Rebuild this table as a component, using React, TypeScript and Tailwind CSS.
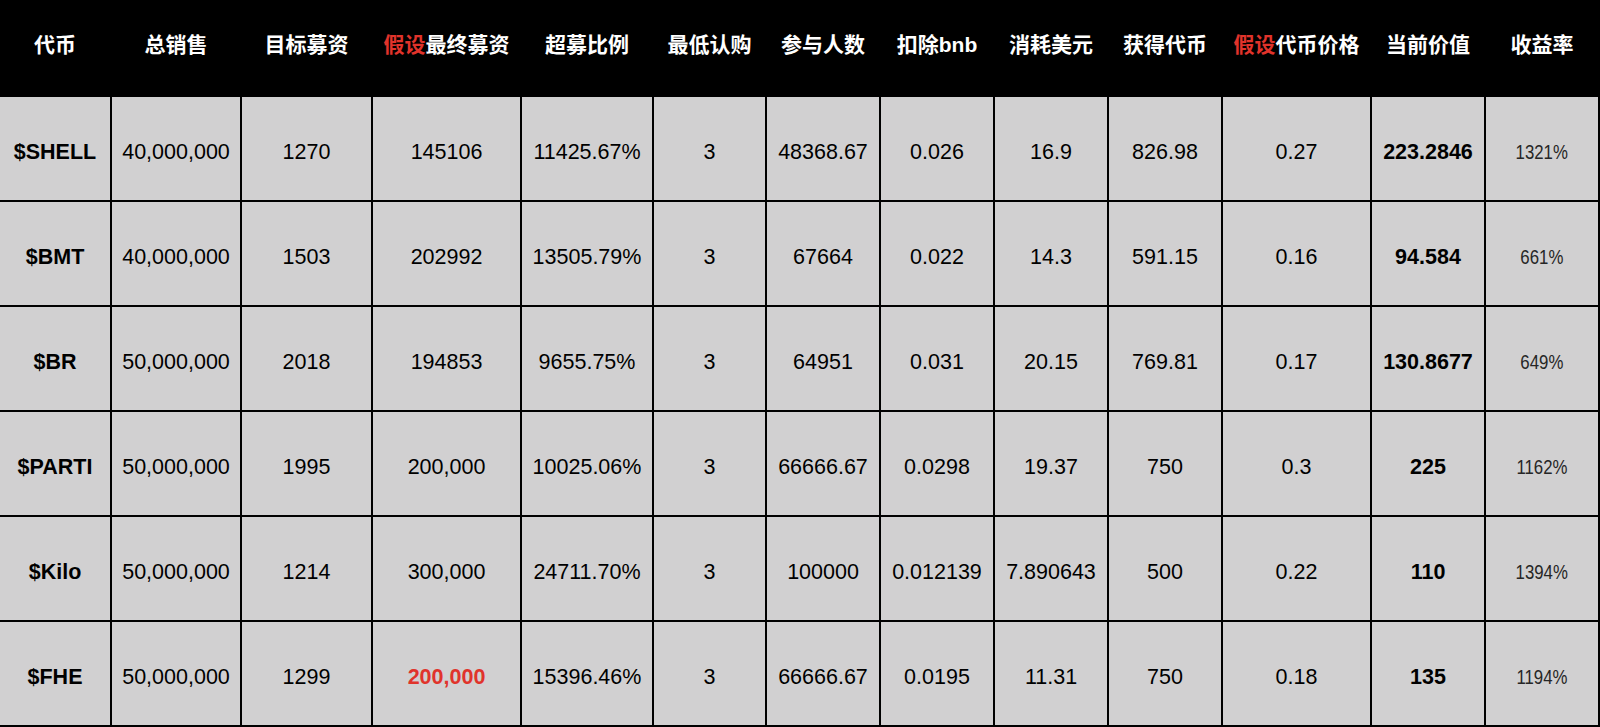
import React from "react";

const cols =
  "grid grid-cols-[110px_128px_129px_147px_130px_111px_112px_112px_112px_112px_147px_112px_112px] gap-x-[2px]";

type Row = {
  coin: string;
  total: string;
  target: string;
  final: string;
  finalRed?: boolean;
  ratio: string;
  min: string;
  people: string;
  bnb: string;
  usd: string;
  tokens: string;
  price: string;
  value: string;
  yieldRate: string;
};

const rows: Row[] = [
  { coin: "$SHELL", total: "40,000,000", target: "1270", final: "145106", ratio: "11425.67%", min: "3", people: "48368.67", bnb: "0.026", usd: "16.9", tokens: "826.98", price: "0.27", value: "223.2846", yieldRate: "1321%" },
  { coin: "$BMT", total: "40,000,000", target: "1503", final: "202992", ratio: "13505.79%", min: "3", people: "67664", bnb: "0.022", usd: "14.3", tokens: "591.15", price: "0.16", value: "94.584", yieldRate: "661%" },
  { coin: "$BR", total: "50,000,000", target: "2018", final: "194853", ratio: "9655.75%", min: "3", people: "64951", bnb: "0.031", usd: "20.15", tokens: "769.81", price: "0.17", value: "130.8677", yieldRate: "649%" },
  { coin: "$PARTI", total: "50,000,000", target: "1995", final: "200,000", ratio: "10025.06%", min: "3", people: "66666.67", bnb: "0.0298", usd: "19.37", tokens: "750", price: "0.3", value: "225", yieldRate: "1162%" },
  { coin: "$Kilo", total: "50,000,000", target: "1214", final: "300,000", ratio: "24711.70%", min: "3", people: "100000", bnb: "0.012139", usd: "7.890643", tokens: "500", price: "0.22", value: "110", yieldRate: "1394%" },
  { coin: "$FHE", total: "50,000,000", target: "1299", final: "200,000", finalRed: true, ratio: "15396.46%", min: "3", people: "66666.67", bnb: "0.0195", usd: "11.31", tokens: "750", price: "0.18", value: "135", yieldRate: "1194%" },
];

function Cell({ children, className = "" }: { children: React.ReactNode; className?: string }) {
  return (
    <div
      className={
        "bg-[#d1d0d1] h-[103px] flex items-center justify-center pt-[7px] text-[21.5px] whitespace-nowrap " +
        className
      }
    >
      {children}
    </div>
  );
}

export default function App() {
  const font = { fontFamily: '"Liberation Sans", Arial, "Noto Sans CJK SC", sans-serif' };
  return (
    <div className="w-[1600px] h-[727px] bg-white overflow-hidden text-black" style={font}>
      <div className={cols + " bg-black h-[97px] pr-[2px] pb-[8px] items-center text-white font-bold text-[21px]"}>
        <div className="text-center">代币</div>
        <div className="text-center">总销售</div>
        <div className="text-center">目标募资</div>
        <div className="text-center">
          <span className="text-[#e0332b]">假设</span>最终募资
        </div>
        <div className="text-center">超募比例</div>
        <div className="text-center">最低认购</div>
        <div className="text-center">参与人数</div>
        <div className="text-center">扣除bnb</div>
        <div className="text-center">消耗美元</div>
        <div className="text-center">获得代币</div>
        <div className="text-center">
          <span className="text-[#e0332b]">假设</span>代币价格
        </div>
        <div className="text-center">当前价值</div>
        <div className="text-center">收益率</div>
      </div>
      <div className={cols + " gap-y-[2px] bg-black pr-[2px] pb-[2px]"}>
        {rows.map((r) => (
          <React.Fragment key={r.coin}>
            <Cell className="font-bold">{r.coin}</Cell>
            <Cell>{r.total}</Cell>
            <Cell>{r.target}</Cell>
            <Cell>
              {r.finalRed ? <span className="font-bold text-[#e0332b]">{r.final}</span> : r.final}
            </Cell>
            <Cell>{r.ratio}</Cell>
            <Cell>{r.min}</Cell>
            <Cell>{r.people}</Cell>
            <Cell>{r.bnb}</Cell>
            <Cell>{r.usd}</Cell>
            <Cell>{r.tokens}</Cell>
            <Cell>{r.price}</Cell>
            <Cell className="font-bold">{r.value}</Cell>
            <Cell>
              <span className="inline-block scale-x-[0.8] text-[#262626] text-[21px]">{r.yieldRate}</span>
            </Cell>
          </React.Fragment>
        ))}
      </div>
    </div>
  );
}
